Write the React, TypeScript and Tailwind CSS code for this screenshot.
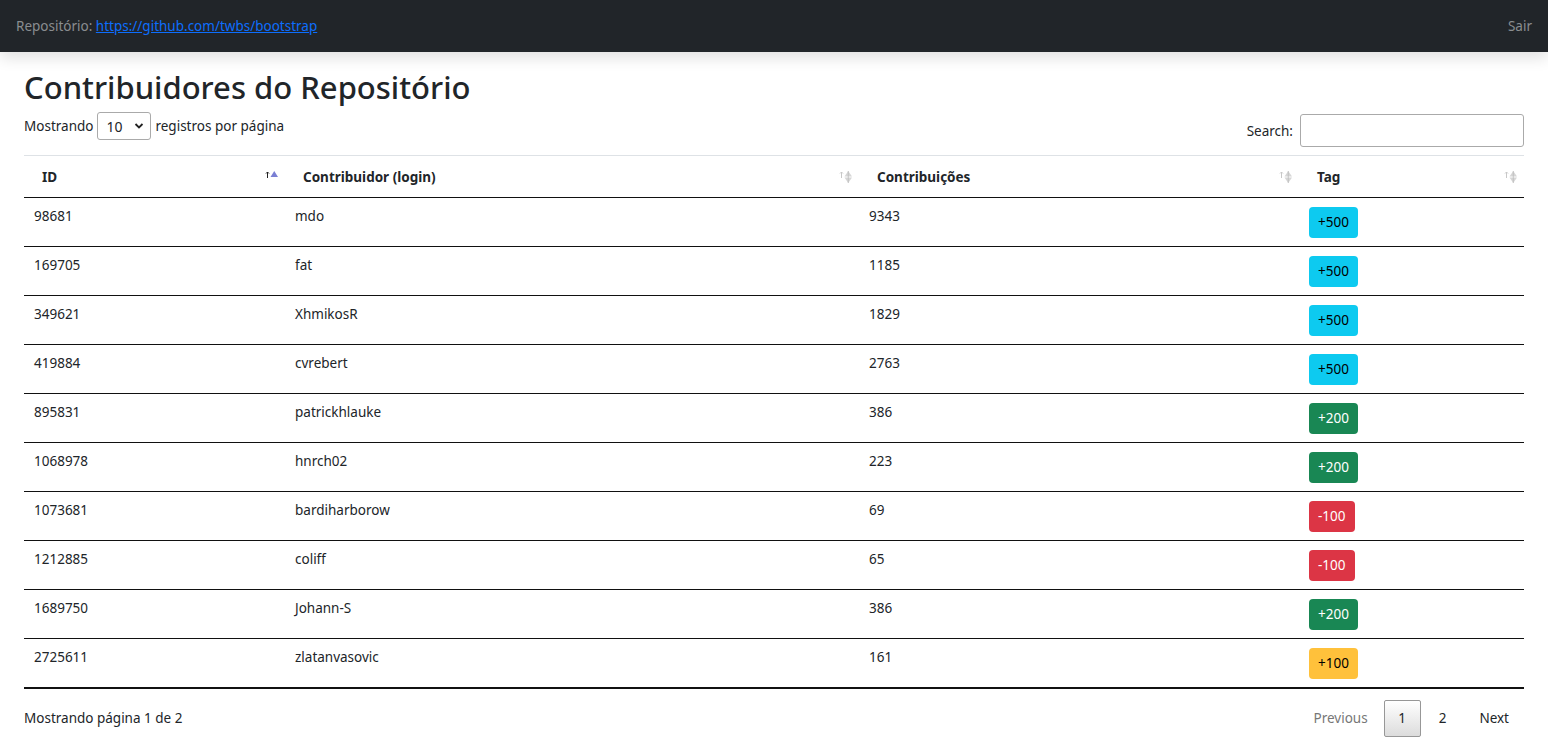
import React from 'react';

type Row = { id: number; login: string; contributions: number };

const rows: Row[] = [
  { id: 98681, login: 'mdo', contributions: 9343 },
  { id: 169705, login: 'fat', contributions: 1185 },
  { id: 349621, login: 'XhmikosR', contributions: 1829 },
  { id: 419884, login: 'cvrebert', contributions: 2763 },
  { id: 895831, login: 'patrickhlauke', contributions: 386 },
  { id: 1068978, login: 'hnrch02', contributions: 223 },
  { id: 1073681, login: 'bardiharborow', contributions: 69 },
  { id: 1212885, login: 'coliff', contributions: 65 },
  { id: 1689750, login: 'Johann-S', contributions: 386 },
  { id: 2725611, login: 'zlatanvasovic', contributions: 161 },
];

// same thresholds the page uses for the tag
const tagFor = (n: number) => {
  if (n > 500) return { text: '+500', cls: 'bg-[#0dcaf0] text-black' };
  if (n > 200) return { text: '+200', cls: 'bg-[#198754] text-white' };
  if (n > 100) return { text: '+100', cls: 'bg-[#ffc13b] text-black' };
  return { text: '-100', cls: 'bg-[#dc3545] text-white' };
};

const SortIcon = ({ active }: { active?: boolean }) => (
  <svg width="14" height="18" viewBox="0 0 14 18" className="shrink-0">
    {/* small arrow */}
    <path d="M2.5 4v6M1 5.5L2.5 4L4 5.5" fill="none" stroke={active ? '#222' : '#c8c8c8'} strokeWidth="1" />
    {active ? (
      <path d="M5.5 9L9.25 3L13 9Z" fill="#7a7fd4" />
    ) : (
      <>
        <path d="M5.5 8.5L9.25 3L13 8.5Z" fill="#d6d6d6" />
        <path d="M5.5 9.5L9.25 15L13 9.5Z" fill="#d6d6d6" />
        <path d="M9.25 3v12" stroke="#bbb" strokeWidth="0.8" />
      </>
    )}
  </svg>
);

const headers = [
  { label: 'ID', active: true },
  { label: 'Contribuidor (login)' },
  { label: 'Contribuições' },
  { label: 'Tag' },
];

export default function App() {
  return (
    <div className="min-h-screen bg-white text-[#212529] font-['Noto_Sans',sans-serif] text-[13.5px]">
      <header className="h-[52px] bg-[#212529] flex items-center justify-between px-4 shadow-[0_6px_14px_rgba(0,0,0,0.12)] relative">
        <div className="text-[13.5px] text-[#8a8d90]">
          Repositório:{' '}
          <a href="#" className="text-[#0d6efd] underline">
            https://github.com/twbs/bootstrap
          </a>
        </div>
        <a href="#" className="text-[13.5px] text-[#8a8d90]">
          Sair
        </a>
      </header>

      <main className="px-6 pt-[17px]">
        <h2 className="text-[31px] font-medium leading-[1.2] mb-[8px]">Contribuidores do Repositório</h2>

        <div className="flex items-start justify-between pb-[8px]">
          <div className="flex items-center gap-1 mt-[-2px]">
            <span>Mostrando</span>
            <div className="w-[54px] h-[28px] border border-[#aaa] rounded-[3px] flex items-center justify-between pl-2 pr-1.5 text-[14px]">
              <span>10</span>
              <svg width="10" height="8" viewBox="0 0 10 8">
                <path d="M1.5 2l3.5 3.5L8.5 2" fill="none" stroke="#222" strokeWidth="1.8" />
              </svg>
            </div>
            <span>registros por página</span>
          </div>
          <div className="flex items-center gap-[7px]">
            <span>Search:</span>
            <input className="w-[224px] h-[33px] border border-[#aaa] rounded-[3px] outline-none px-2" />
          </div>
        </div>

        <table className="w-full table-fixed border-collapse border-t border-[#dee2e6]">
          <colgroup>
            <col className="w-[261px]" />
            <col className="w-[574px]" />
            <col className="w-[440px]" />
            <col />
          </colgroup>
          <thead>
            <tr className="border-b border-[#111]">
              {headers.map((h) => (
                <th key={h.label} className="h-[42px] py-0 pl-[18px] pr-[6px] text-left font-bold">
                  <div className="flex items-center justify-between">
                    <span>{h.label}</span>
                    <SortIcon active={h.active} />
                  </div>
                </th>
              ))}
            </tr>
          </thead>
          <tbody>
            {rows.map((r, i) => {
              const tag = tagFor(r.contributions);
              return (
                <tr key={r.id} className={i === rows.length - 1 ? 'border-b-2 border-[#111]' : 'border-b border-[#111]'}>
                  <td className="h-[49px] align-top pt-[8px] px-[10px] leading-[21px]">{r.id}</td>
                  <td className="align-top pt-[8px] px-[10px] leading-[21px]">{r.login}</td>
                  <td className="align-top pt-[8px] px-[10px] leading-[21px]">{r.contributions}</td>
                  <td className="align-top pt-[9px] px-[10px]">
                    <span className={`inline-block rounded-[4px] px-[9px] h-[31px] leading-[31px] text-[13.5px] ${tag.cls}`}>
                      {tag.text}
                    </span>
                  </td>
                </tr>
              );
            })}
          </tbody>
        </table>

        <div className="flex items-center justify-between pt-[11px]">
          <span>Mostrando página 1 de 2</span>
          <div className="flex items-center">
            <span className="px-[14px] py-[7px] text-[#777]">Previous</span>
            <span className="ml-[2px] w-[37px] h-[37px] flex items-center justify-center border border-[#979797] rounded-[2px] bg-gradient-to-b from-white to-[#dcdcdc]">
              1
            </span>
            <span className="ml-[2px] px-[16px] py-[7px]">2</span>
            <span className="ml-[2px] px-[15px] py-[7px]">Next</span>
          </div>
        </div>
      </main>
    </div>
  );
}
